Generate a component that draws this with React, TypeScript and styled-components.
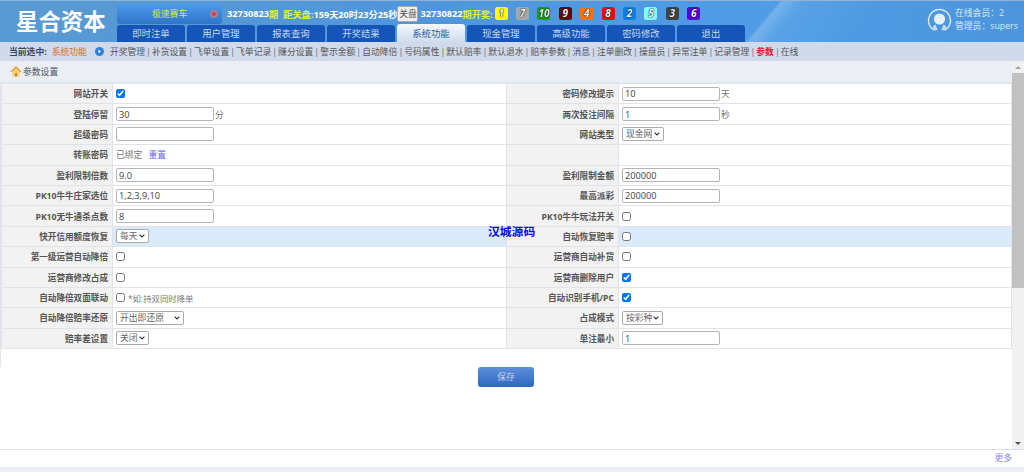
import React from 'react';
import styled, { createGlobalStyle } from 'styled-components';

const GlobalStyle = createGlobalStyle`
  html, body {
    margin: 0;
    padding: 0;
    height: 100%;
    overflow: hidden;
    background: #fff;
  }
  body {
    font-family: "Open Sans", "Noto Sans CJK SC", sans-serif;
    font-size: 8.8px;
    color: #555;
  }
`;

const Page = styled.div`
  width: 1024px;
  height: 472px;
  display: flex;
  flex-direction: column;
`;

const Header = styled.header`
  height: 42px;
  flex: none;
  display: flex;
  border-top: 1px solid #8fb4d8;
  box-sizing: border-box;
  background:
    linear-gradient(130deg, transparent 73.6%, rgba(255, 255, 255, 0.22) 74%, rgba(255, 255, 255, 0.05) 76%, transparent 84%),
    linear-gradient(90deg, #5a9ad2 0%, #4f96dc 40%, #4f9de6 75%, #4c95dc 100%);
`;

const Logo = styled.div`
  width: 117px;
  flex: none;
  padding-left: 16px;
  box-sizing: border-box;
  line-height: 41px;
  font-size: 22.4px;
  font-weight: 700;
  color: #fff;
  white-space: nowrap;
`;

const HeaderMain = styled.div`
  flex: 1;
  display: flex;
  flex-direction: column;
  justify-content: space-between;
`;

const InfoBar = styled.div`
  display: flex;
  align-items: center;
  height: 21px;
  margin-top: 2px;
  font-size: 9.2px;
  font-weight: 700;
  color: #fff;
  white-space: nowrap;
`;

const GamePicker = styled.div`
  width: 105px;
  height: 20px;
  margin-right: 5px;
  padding: 0 4px 0 35px;
  box-sizing: border-box;
  display: flex;
  align-items: center;
  justify-content: space-between;
  border-radius: 3px;
  background: linear-gradient(180deg, #4d9be8, #2e74cc);
  color: #d6ee3c;
  font-weight: 400;
  font-size: 8.8px;
`;

const GameDot = styled.span`
  width: 4px;
  height: 4px;
  border-radius: 50%;
  background: #e0344a;
  border: 2px solid #a9808f;
`;

const Hint = styled.span<{ $gap?: number }>`
  color: #e2f03a;
  margin-left: ${(p) => p.$gap ?? 0}px;
`;

const CloseButton = styled.span`
  width: 21px;
  height: 16px;
  margin: 0 2px 0 0;
  box-sizing: border-box;
  border: 1px solid #aaa;
  border-radius: 2px;
  background: #eee;
  color: #555;
  font-weight: 400;
  font-size: 8.8px;
  line-height: 14px;
  text-align: center;
`;

const Balls = styled.div`
  display: flex;
  gap: 8.4px;
  margin-left: 2px;
`;

const Ball = styled.span<{ $color: string }>`
  width: 13px;
  height: 13px;
  border-radius: 2.5px;
  background: ${(p) => p.$color};
  color: #f4f4f4;
  font-size: 10px;
  font-style: italic;
  font-weight: 700;
  line-height: 13px;
  text-align: center;
  text-shadow: 0 0 1.5px #000, 0 0 1px #000;
`;

const Tabs = styled.nav`
  display: flex;
  gap: 2px;
  height: 17px;
`;

const Tab = styled.a<{ $active?: boolean }>`
  width: 68px;
  height: ${(p) => (p.$active ? 18 : 17)}px;
  margin-top: ${(p) => (p.$active ? -1 : 0)}px;
  border-radius: 3px 3px 0 0;
  background: ${(p) => (p.$active ? 'linear-gradient(180deg, #f4f8fc, #cfdcee)' : '#1555b8')};
  color: ${(p) => (p.$active ? '#2a5a9c' : '#c6d8f0')};
  font-size: 9.4px;
  line-height: ${(p) => (p.$active ? 19 : 17)}px;
  text-align: center;
`;

const UserBox = styled.div`
  width: 97px;
  flex: none;
  display: flex;
  align-items: center;
  gap: 3px;
  padding-bottom: 3px;
  box-sizing: border-box;
`;

const UserLines = styled.div`
  color: #d9e8f8;
  font-size: 8.8px;
  line-height: 13px;
  white-space: nowrap;
`;

const SubNav = styled.div`
  height: 19px;
  flex: none;
  display: flex;
  align-items: center;
  padding-left: 9px;
  background: #d1daeb;
  white-space: nowrap;
`;

const SubLabel = styled.b`
  color: #3a4660;
`;

const SubCurrent = styled.span`
  margin: 0 8px 0 5px;
  color: #e8651e;
`;

const SubIcon = styled.svg`
  width: 9px;
  height: 9px;
  margin-right: 6px;
`;

const SubLink = styled.a<{ $red?: boolean }>`
  color: ${(p) => (p.$red ? '#e0202c' : '#555')};
  font-weight: ${(p) => (p.$red ? 700 : 400)};
`;

const Sep = styled.span`
  margin: 0 1px;
  color: #666;
`;

const Body = styled.div`
  flex: 1;
  min-height: 0;
  display: flex;
`;

const Pane = styled.main`
  flex: 1;
  min-width: 0;
  position: relative;
`;

const Rail = styled.div`
  width: 12px;
  flex: none;
  display: flex;
  flex-direction: column;
  background: #f1f1f1;
`;

const RailEnd = styled.div`
  height: 12px;
  display: flex;
  align-items: center;
  justify-content: center;
`;

const Arrow = styled.span<{ $down?: boolean }>`
  width: 0;
  height: 0;
  border-left: 3px solid transparent;
  border-right: 3px solid transparent;
  border-top: ${(p) => (p.$down ? '3px solid #505050' : 'none')};
  border-bottom: ${(p) => (p.$down ? 'none' : '3px solid #a3a3a3')};
`;

const RailTrack = styled.div`
  flex: 1;
`;

const Thumb = styled.div`
  height: 215px;
  background: #c1c1c1;
`;

const Crumb = styled.div`
  height: 22px;
  display: flex;
  align-items: center;
  gap: 1px;
  padding: 0 0 1px 10px;
  box-sizing: border-box;
  background: #ebeff3;
  border-bottom: 1px solid #e1e7f0;
  color: #4a5568;
`;

const TableWrap = styled.div`
  border-left: 1px solid #e2e6ec;
  padding-bottom: 17.5px;
`;

const Table = styled.table`
  width: 100%;
  border-collapse: collapse;
  table-layout: fixed;
`;

const Col = styled.col<{ $w: number }>`
  width: ${(p) => p.$w}px;
`;

const Row = styled.tr<{ $hl?: boolean }>`
  height: 20.4px;
  background: ${(p) => (p.$hl ? '#dbeafb' : '#fff')};
`;

const Label = styled.th`
  padding: 0 4px 0 0;
  background: #f2f2f2;
  border: 1px solid #dfe4ec;
  color: #555;
  font-weight: 700;
  font-size: 8.6px;
  text-align: right;
  white-space: nowrap;
`;

const Value = styled.td`
  padding: 0 0 0 3px;
  border: 1px solid #dfe4ec;
  color: #777;
  white-space: nowrap;
`;

const ValueLine = styled.div`
  display: flex;
  align-items: center;
`;

const TextInput = styled.input`
  width: 98px;
  height: 14px;
  padding: 0 2px;
  box-sizing: border-box;
  border: 1px solid #b5b5b5;
  border-radius: 2px;
  font: inherit;
  font-size: 9.2px;
  color: #444;
  background: #fff;
  outline: none;
`;

const Unit = styled.span`
  margin-left: 1px;
  color: #777;
`;

const Check = styled.input`
  width: 9px;
  height: 9px;
  margin: 0;
  display: block;
`;

const Select = styled.select<{ $w: number }>`
  appearance: none;
  width: ${(p) => p.$w}px;
  height: 14px;
  padding: 0 0 0 3px;
  box-sizing: border-box;
  border: 1px solid #aaa;
  border-radius: 2px;
  background-color: #fff;
  background-image: url("data:image/svg+xml,%3Csvg xmlns='http://www.w3.org/2000/svg' width='6' height='4'%3E%3Cpath d='M.6.6L3 3l2.400-2.400' fill='none' stroke='%23333' stroke-width='1.100'/%3E%3C/svg%3E");
  background-repeat: no-repeat;
  background-position: right 3px center;
  color: #666;
  font: inherit;
  font-size: 8.8px;
  outline: none;
`;

const ResetLink = styled.a`
  margin-left: 6px;
  color: #6a63f0;
`;

const Note = styled.span`
  margin-left: 3px;
  color: #777;
  font-size: 8.4px;
`;

const Watermark = styled.div`
  position: absolute;
  left: 488px;
  top: 161px;
  color: #0808f0;
  font-size: 11.8px;
  font-weight: 700;
  white-space: nowrap;
`;

const SaveBar = styled.div`
  display: flex;
  justify-content: center;
`;

const SaveButton = styled.button`
  width: 56px;
  height: 20px;
  padding: 0;
  border: none;
  border-radius: 3px;
  background: linear-gradient(180deg, #5f8fdb, #2f66c0);
  box-shadow: 0 0 1px #9ab4dc;
  color: #c9d6ec;
  font: inherit;
`;

const Footer = styled.footer`
  height: 23px;
  flex: none;
  box-sizing: border-box;
  padding: 0 12px 0 0;
  border-top: 1px solid #d9dff0;
  border-bottom: 5px solid #ebeff3;
  text-align: right;
  line-height: 17px;
`;

const MoreLink = styled.a`
  color: #8c86f5;
`;

const UserIcon = () => (
  <svg width="25" height="25" viewBox="0 0 25 25" fill="none">
    <path d="M7.2 22.2a11 11 0 1 1 10.600 0" stroke="#dceaf8" strokeWidth="1.400" />
    <circle cx="12.500" cy="11" r="5.600" fill="#e6f0fa" />
    <path d="M5.500 18.500l3-2 2 5.500-3 .4zM19.500 18.500l-3-2-2 5.500 3 .4z" fill="#c9dcf0" />
  </svg>
);

const HomeIcon = () => (
  <svg width="12" height="12" viewBox="0 0 12 12">
    <path d="M2.500 6v5.500h7V6L6 3z" fill="#f6cf6a" />
    <rect x="5" y="8" width="2" height="3.500" fill="#c98a2a" />
    <path d="M0.500 6.500L6 1l5.500 5.500-1 .8L6 3 1.500 7.300z" fill="#ee9a2c" />
  </svg>
);

const balls: [string, string][] = [
  ['1', '#ffff00'],
  ['7', '#a8a8a8'],
  ['10', '#1c9e08'],
  ['9', '#6a0408'],
  ['4', '#ff7200'],
  ['8', '#f00808'],
  ['2', '#0a80ea'],
  ['5', '#80ffff'],
  ['3', '#424242'],
  ['6', '#5206d6'],
];

const tabs = ['即时注单', '用户管理', '报表查询', '开奖结果', '系统功能', '现金管理', '高级功能', '密码修改', '退出'];

const links = [
  '开奖管理', '补货设置', '飞单设置', '飞单记录', '赚分设置', '警示金额', '自动降倍', '号码属性', '默认赔率',
  '默认退水', '赔率参数', '消息', '注单删改', '操盘员', '异常注单', '记录管理', '参数', '在线',
];

const box = (on = false) => <Check type="checkbox" defaultChecked={on} />;
const text = (value: string, unit?: string) => (
  <ValueLine>
    <TextInput defaultValue={value} />
    {unit && <Unit>{unit}</Unit>}
  </ValueLine>
);
const pick = (value: string, w: number) => (
  <Select $w={w} defaultValue={value}>
    <option>{value}</option>
  </Select>
);

const rows: [string, React.ReactNode, string, React.ReactNode][] = [
  ['网站开关', box(true), '密码修改提示', text('10', '天')],
  ['登陆停留', text('30', '分'), '两次投注间隔', text('1', '秒')],
  ['超级密码', text(''), '网站类型', pick('现金网', 42)],
  [
    '转账密码',
    <ValueLine>
      已绑定<ResetLink>重置</ResetLink>
    </ValueLine>,
    '',
    null,
  ],
  ['盈利限制倍数', text('9.0'), '盈利限制金额', text('200000')],
  ['PK10牛牛庄家选位', text('1,2,3,9,10'), '最高派彩', text('200000')],
  ['PK10无牛通杀点数', text('8'), 'PK10牛牛玩法开关', box()],
  ['快开信用额度恢复', pick('每天', 33), '自动恢复赔率', box()],
  ['第一级运营自动降倍', box(), '运营商自动补货', box()],
  ['运营商修改占成', box(), '运营商删除用户', box(true)],
  [
    '自动降倍双面联动',
    <ValueLine>
      {box()}
      <Note>*如:持双同时降单</Note>
    </ValueLine>,
    '自动识别手机/PC',
    box(true),
  ],
  ['自动降倍赔率还原', pick('开出即还原', 68), '占成模式', pick('按彩种', 41)],
  ['赔率差设置', pick('关闭', 33), '单注最小', text('1')],
];

export default function App() {
  return (
    <Page>
      <GlobalStyle />
      <Header>
        <Logo>星合资本</Logo>
        <HeaderMain>
          <InfoBar>
            <GamePicker>
              极速赛车
              <GameDot />
            </GamePicker>
            32730823<Hint>期</Hint>
            <Hint $gap={5}>距关盘:</Hint>159天20时23分25秒
            <CloseButton>关盘</CloseButton>
            32730822<Hint>期开奖:</Hint>
            <Balls>
              {balls.map(([n, c]) => (
                <Ball key={n} $color={c}>
                  {n}
                </Ball>
              ))}
            </Balls>
          </InfoBar>
          <Tabs>
            {tabs.map((t) => (
              <Tab key={t} $active={t === '系统功能'}>
                {t}
              </Tab>
            ))}
          </Tabs>
        </HeaderMain>
        <UserBox>
          <UserIcon />
          <UserLines>
            在线会员：2
            <br />
            管理员：supers
          </UserLines>
        </UserBox>
      </Header>
      <SubNav>
        <SubLabel>当前选中:</SubLabel>
        <SubCurrent>系统功能</SubCurrent>
        <SubIcon viewBox="0 0 9 9">
          <circle cx="4.500" cy="4.500" r="4.500" fill="#2f7fd8" />
          <path d="M3.500 2.500l2.500 2-2.500 2z" fill="#fff" />
        </SubIcon>
        {links.map((l, i) => (
          <React.Fragment key={l}>
            {i > 0 && <Sep>|</Sep>}
            <SubLink $red={l === '参数'}>{l}</SubLink>
          </React.Fragment>
        ))}
      </SubNav>
      <Body>
        <Pane>
          <Crumb>
            <HomeIcon />
            参数设置
          </Crumb>
          <TableWrap>
            <Table>
              <colgroup>
                <Col $w={111} />
                <Col $w={394} />
                <Col $w={112} />
                <col />
              </colgroup>
              <tbody>
                {rows.map(([l1, v1, l2, v2], i) => (
                  <Row key={i} $hl={i === 7}>
                    <Label>{l1}</Label>
                    <Value>{v1}</Value>
                    <Label>{l2}</Label>
                    <Value>{v2}</Value>
                  </Row>
                ))}
              </tbody>
            </Table>
          </TableWrap>
          <SaveBar>
            <SaveButton>保存</SaveButton>
          </SaveBar>
          <Watermark>汉城源码</Watermark>
        </Pane>
        <Rail>
          <RailEnd>
            <Arrow />
          </RailEnd>
          <RailTrack>
            <Thumb />
          </RailTrack>
          <RailEnd>
            <Arrow $down />
          </RailEnd>
        </Rail>
      </Body>
      <Footer>
        <MoreLink>更多</MoreLink>
      </Footer>
    </Page>
  );
}
